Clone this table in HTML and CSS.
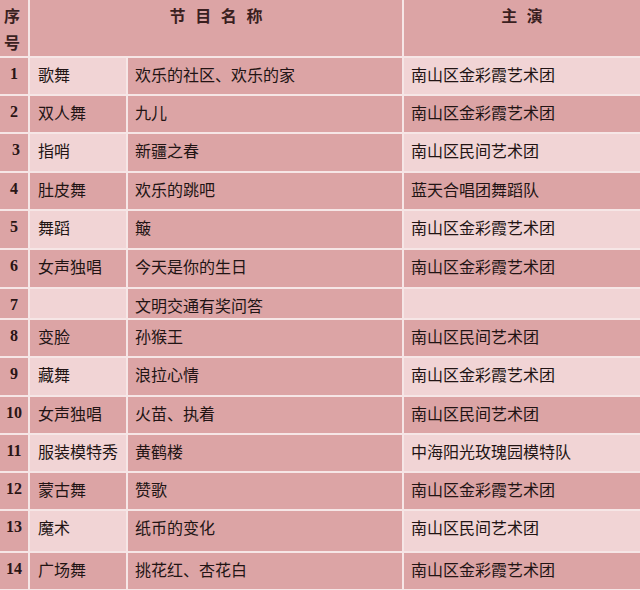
FILE: index.html
```html
<!DOCTYPE html>
<html lang="zh">
<head>
<meta charset="utf-8">
<title>节目单</title>
<link rel="stylesheet" href="styles.css">
</head>
<body>
<table class="program">
  <colgroup>
    <col class="c-no">
    <col class="c-type">
    <col class="c-title">
    <col class="c-cast">
  </colgroup>
  <thead>
    <tr class="head">
      <th class="no-head">序号</th>
      <th colspan="2" class="title-head">节 目 名 称</th>
      <th class="cast-head">主 演</th>
    </tr>
  </thead>
  <tbody>
    <tr class="odd"><td class="no">1</td><td class="type">歌舞</td><td class="title">欢乐的社区、欢乐的家</td><td class="cast">南山区金彩霞艺术团</td></tr>
    <tr class="even"><td class="no">2</td><td class="type">双人舞</td><td class="title">九儿</td><td class="cast">南山区金彩霞艺术团</td></tr>
    <tr class="odd tall"><td class="no">&nbsp;3</td><td class="type">指哨</td><td class="title">新疆之春</td><td class="cast">南山区民间艺术团</td></tr>
    <tr class="even"><td class="no">4</td><td class="type">肚皮舞</td><td class="title">欢乐的跳吧</td><td class="cast">蓝天合唱团舞蹈队</td></tr>
    <tr class="odd tall"><td class="no">5</td><td class="type">舞蹈</td><td class="title">簸</td><td class="cast">南山区金彩霞艺术团</td></tr>
    <tr class="even mid"><td class="no">6</td><td class="type">女声独唱</td><td class="title">今天是你的生日</td><td class="cast">南山区金彩霞艺术团</td></tr>
    <tr class="odd short"><td class="no">7</td><td class="type"></td><td class="title">文明交通有奖问答</td><td class="cast"></td></tr>
    <tr class="even"><td class="no">8</td><td class="type">变脸</td><td class="title">孙猴王</td><td class="cast">南山区民间艺术团</td></tr>
    <tr class="odd mid"><td class="no">9</td><td class="type">藏舞</td><td class="title">浪拉心情</td><td class="cast">南山区金彩霞艺术团</td></tr>
    <tr class="even"><td class="no">10</td><td class="type">女声独唱</td><td class="title">火苗、执着</td><td class="cast">南山区民间艺术团</td></tr>
    <tr class="odd"><td class="no">11</td><td class="type">服装模特秀</td><td class="title">黄鹤楼</td><td class="cast">中海阳光玫瑰园模特队</td></tr>
    <tr class="even"><td class="no">12</td><td class="type">蒙古舞</td><td class="title">赞歌</td><td class="cast">南山区金彩霞艺术团</td></tr>
    <tr class="odd big"><td class="no">13</td><td class="type">魔术</td><td class="title">纸币的变化</td><td class="cast">南山区民间艺术团</td></tr>
    <tr class="even"><td class="no">14</td><td class="type">广场舞</td><td class="title">挑花红、杏花白</td><td class="cast">南山区金彩霞艺术团</td></tr>
  </tbody>
</table>
</body>
</html>
```
FILE: styles.css
```css
html, body {
  margin: 0;
  padding: 0;
  background: #dca4a5;
}

.program {
  width: 640px;
  table-layout: fixed;
  border-collapse: collapse;
  font-family: "Noto Sans CJK SC", "Noto Sans", sans-serif;
  font-size: 16px;
  color: #221414;
}

.c-no { width: 29px; }
.c-type { width: 98px; }
.c-title { width: 276px; }
.c-cast { width: 237px; }

.program th,
.program td {
  border: 2px solid #f6e6e6;
  border-top: 0;
  border-left: 0;
  padding: 5px 0 0 7px;
  vertical-align: top;
  text-align: left;
  line-height: 22px;
  background: #dca4a5;
  white-space: nowrap;
  overflow: hidden;
}

.program th:last-child,
.program td:last-child {
  border-right: 0;
}

.head { height: 56px; }
.head th {
  font-weight: 700;
  color: #3a1f1f;
  padding-top: 4px;
}
.program th.no-head {
  white-space: normal;
  line-height: 27px;
  padding: 2px 0 0 4px;
}
.program th.title-head,
.program th.cast-head {
  text-align: center;
  padding-left: 0;
  word-spacing: 6px;
}

tbody tr { height: 38px; }
tbody tr.tall { height: 39px; }
tbody tr.mid { height: 39px; }
tbody tr.short { height: 31px; }
tbody tr.big { height: 42px; }

.program td.no {
  font-family: "Liberation Serif", serif;
  font-weight: 700;
  text-align: center;
  padding-left: 0;
  color: #2a1515;
}

.program td.type { padding-left: 8px; }
.program td.title { padding-left: 7px; }
.program td.cast { padding-left: 7px; }

.odd td.type,
.odd td.cast {
  background: #f1d4d5;
}
```
